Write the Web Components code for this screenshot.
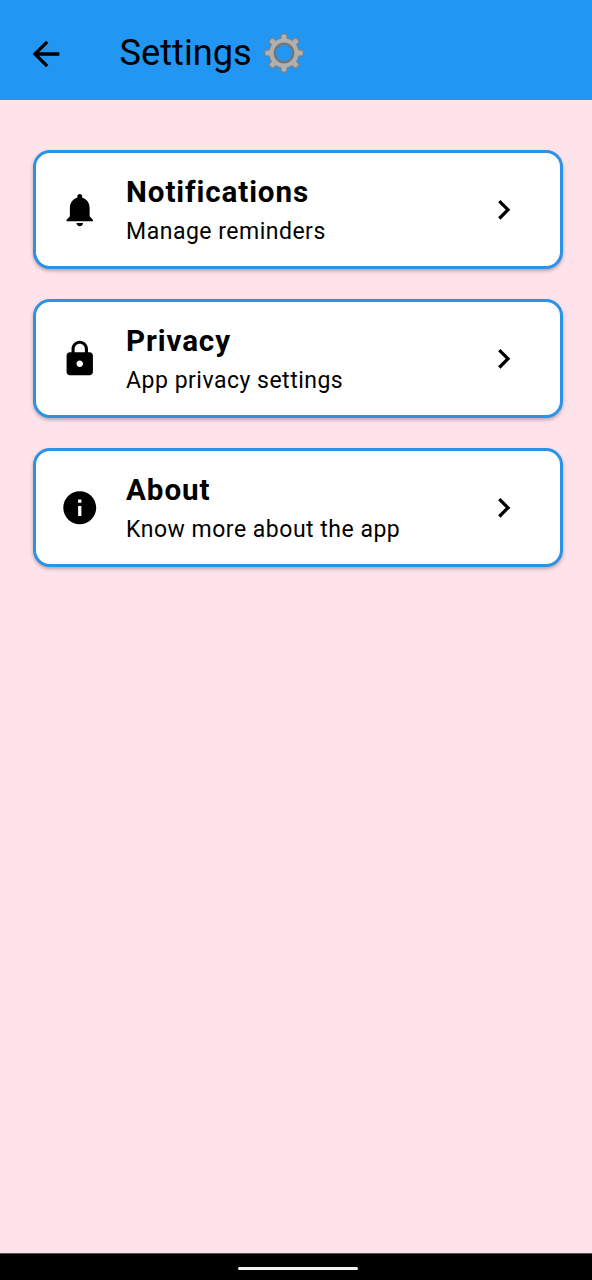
<!DOCTYPE html>
<html lang="en">
<head>
<meta charset="utf-8">
<title>Settings</title>
<style>
html,body{margin:0;height:100%}
body{font-family:Roboto,"Liberation Sans",sans-serif;color:#000;overflow:hidden}
</style>
</head>
<body>
<settings-screen></settings-screen>
<script>
const ICONS = {
  back: 'M20 11H7.83l5.59-5.59L12 4l-8 8 8 8 1.41-1.41L7.83 13H20v-2z',
  bell: 'M12 22c1.1 0 2-.9 2-2h-4c0 1.1.89 2 2 2zm6-6v-5c0-3.07-1.64-5.64-4.5-6.32V4c0-.83-.67-1.5-1.5-1.5s-1.5.67-1.5 1.5v.68C7.63 5.36 6 7.92 6 11v5l-2 2v1h16v-1l-2-2z',
  lock: 'M18 8h-1V6c0-2.76-2.24-5-5-5S7 3.24 7 6v2H6c-1.1 0-2 .9-2 2v10c0 1.1.9 2 2 2h12c1.1 0 2-.9 2-2V10c0-1.1-.9-2-2-2zm-6 9c-1.1 0-2-.9-2-2s.9-2 2-2 2 .9 2 2-.9 2-2 2zm3.1-9H8.9V6c0-1.71 1.39-3.1 3.1-3.1s3.1 1.39 3.1 3.1v2z',
  info: 'M12 2C6.48 2 2 6.48 2 12s4.48 10 10 10 10-4.48 10-10S17.52 2 12 2zm1 15h-2v-6h2v6zm0-8h-2V7h2v2z',
  chevron: 'M10 6L8.59 7.41 13.17 12l-4.58 4.59L10 18l6-6z'
};

class MaterialIcon extends HTMLElement {
  connectedCallback() {
    this.attachShadow({mode:'open'}).innerHTML = `
      <style>:host{display:block;flex:none;width:39.5px;height:39.5px}svg{display:block;width:100%;height:100%}</style>
      <svg viewBox="0 0 24 24" fill="#000"><path d="${ICONS[this.getAttribute('name')]}"/></svg>`;
  }
}
customElements.define('material-icon', MaterialIcon);

class GearEmoji extends HTMLElement {
  connectedCallback() {
    const teeth = fill => [0,45,90,135,180,225,270,315].map(a =>
      `<path transform="rotate(${a} 20 20)" d="M17.2 8L17.7 2.2Q17.8 1.4 18.6 1.4H21.4Q22.2 1.4 22.3 2.2L22.8 8Z" ${fill}/>`).join('');
    this.attachShadow({mode:'open'}).innerHTML = `
      <style>:host{display:block;flex:none;width:40px;height:40px}svg{display:block;width:100%;height:100%}</style>
      <svg viewBox="0 0 40 40" role="img" aria-label="gear">
        <g stroke-linejoin="round">${teeth('fill="#7b7f83" stroke="#7b7f83" stroke-width="2.4"')}</g>
        <circle cx="20" cy="20" r="11.8" fill="none" stroke="#7b7f83" stroke-width="7.6"/>
        ${teeth('fill="#b0b0b0"')}
        <circle cx="20" cy="20" r="12.1" fill="none" stroke="#b0b0b0" stroke-width="5"/>
        <circle cx="20" cy="20" r="9.4" fill="none" stroke="#737679" stroke-width="2.2"/>
      </svg>`;
  }
}
customElements.define('gear-emoji', GearEmoji);

class AppBar extends HTMLElement {
  connectedCallback() {
    this.attachShadow({mode:'open'}).innerHTML = `
      <style>
        :host{display:flex;align-items:center;flex:none;box-sizing:border-box;height:100px;padding:7px 0 0 26.4px;background:#2196f3}
        material-icon{width:40px;height:40px}
        .title{margin:0 0 1px 53.2px;font-size:36.2px;line-height:44px;white-space:nowrap}
        gear-emoji{margin:-1px 0 0 12.4px}
      </style>
      <material-icon name="back"></material-icon>
      <span class="title"><slot></slot></span>
      <gear-emoji></gear-emoji>`;
  }
}
customElements.define('app-bar', AppBar);

class SettingCard extends HTMLElement {
  connectedCallback() {
    this.attachShadow({mode:'open'}).innerHTML = `
      <style>
        :host{display:flex;align-items:center;box-sizing:border-box;height:119px;padding:0 36.8px 0 23.6px;border:3.3px solid #2b92e6;border-radius:17px;background:#fff;
          box-shadow:0 2px 3px rgba(0,0,0,.17),0 2px 5px rgba(0,0,0,.12)}
        .text{flex:1;margin-left:27px;white-space:nowrap}
        .name{font-size:29.6px;font-weight:700;line-height:40px;letter-spacing:.88px}
        .detail{font-size:23px;line-height:33px;letter-spacing:.5px;margin:3px 0 -1px}
      </style>
      <material-icon name="${this.getAttribute('icon')}"></material-icon>
      <div class="text"><div class="name"><slot name="name"></slot></div><div class="detail"><slot></slot></div></div>
      <material-icon name="chevron"></material-icon>`;
  }
}
customElements.define('setting-card', SettingCard);

class GestureBar extends HTMLElement {
  connectedCallback() {
    this.attachShadow({mode:'open'}).innerHTML = `
      <style>
        :host{display:flex;justify-content:center;align-items:center;flex:none;box-sizing:border-box;height:27px;padding-top:3px;background:#000;border-top:1px solid #5c5255}
        i{display:block;width:120px;height:3.4px;border-radius:2px;background:#f4f4f4;margin-left:4px}
      </style><i></i>`;
  }
}
customElements.define('gesture-bar', GestureBar);

class SettingsScreen extends HTMLElement {
  connectedCallback() {
    this.attachShadow({mode:'open'}).innerHTML = `
      <style>
        :host{display:flex;flex-direction:column;height:1280px;background:#ffe3ea}
        main{flex:1;display:flex;flex-direction:column;gap:30.1px;padding:50px 29px 0 33px}
      </style>
      <app-bar>Settings</app-bar>
      <main>
        <setting-card icon="bell"><span slot="name">Notifications</span>Manage reminders</setting-card>
        <setting-card icon="lock"><span slot="name">Privacy</span>App privacy settings</setting-card>
        <setting-card icon="info"><span slot="name">About</span>Know more about the app</setting-card>
      </main>
      <gesture-bar></gesture-bar>`;
  }
}
customElements.define('settings-screen', SettingsScreen);
</script>
</body>
</html>
